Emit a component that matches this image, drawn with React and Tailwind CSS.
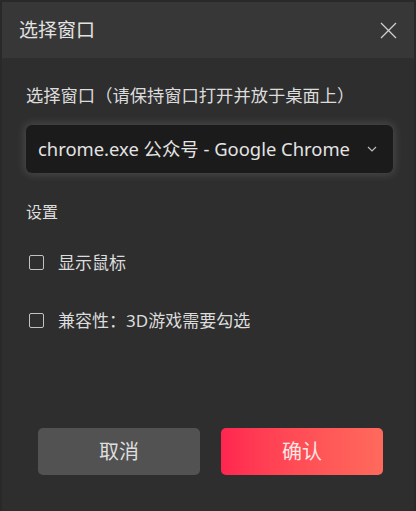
export default function App() {
  const font = { fontFamily: '"Noto Sans", "Noto Sans CJK SC", sans-serif' };
  return (
    <div
      className="flex h-[511px] w-[416px] flex-col border-x-2 border-t-2 border-[#292929] bg-[#2e2e2e] text-[#dcdcdc]"
      style={font}
    >
      {/* header */}
      <header className="flex h-[56px] shrink-0 items-center justify-between bg-[#373737] pl-[17px] pr-[14px]">
        <h1 className="text-[19px] leading-none text-[#e2e2e2]">选择窗口</h1>
        <button className="flex h-6 w-6 items-center justify-center text-[#cfcfcf]">
          <svg width="17" height="17" viewBox="0 0 17 17" fill="none" stroke="currentColor" strokeWidth="1.3">
            <path d="M1 1L16 16M16 1L1 16" />
          </svg>
        </button>
      </header>

      <main className="flex flex-1 flex-col pl-[24px] pr-[21px]">
        <div className="mt-[29px] text-[17.3px] leading-none">选择窗口（请保持窗口打开并放于桌面上）</div>

        <div className="mt-[21px] flex h-[48px] items-center justify-between rounded-md bg-[#1b1b1b] pl-3 pr-[16px] shadow-[0_0_8px_2px_rgba(255,255,255,0.13)]">
          <span className="text-[18.4px] text-[#e4e4e4]">chrome.exe 公众号 - Google Chrome</span>
          <svg width="10" height="6" viewBox="0 0 10 6" fill="none" stroke="#bdbdbd" strokeWidth="1.2">
            <path d="M1 1L5 5L9 1" />
          </svg>
        </div>

        <div className="mt-[31px] text-[16px] leading-none">设置</div>

        <label className="mt-[34px] flex items-center gap-[14px] pl-[3px]">
          <span className="h-[15px] w-[15px] rounded-[2px] border-[1.5px] border-[#c2c2c2]" />
          <span className="text-[17px] leading-none">显示鼠标</span>
        </label>

        <label className="mt-[41px] flex items-center gap-[14px] pl-[3px]">
          <span className="h-[15px] w-[15px] rounded-[2px] border-[1.5px] border-[#c2c2c2]" />
          <span className="text-[17px] leading-none">兼容性：3D游戏需要勾选</span>
        </label>

        <div className="mt-auto mb-[36px] flex gap-[21px] pl-[12px] pr-[10px]">
          <button className="h-[47px] flex-1 rounded-[5px] bg-[#525252] text-[20px] text-[#dedede]">取消</button>
          <button className="h-[47px] flex-1 rounded-[5px] bg-gradient-to-r from-[#ff2550] to-[#ff6a5c] text-[20px] text-[#ffe6e6]">
            确认
          </button>
        </div>
      </main>
    </div>
  );
}
